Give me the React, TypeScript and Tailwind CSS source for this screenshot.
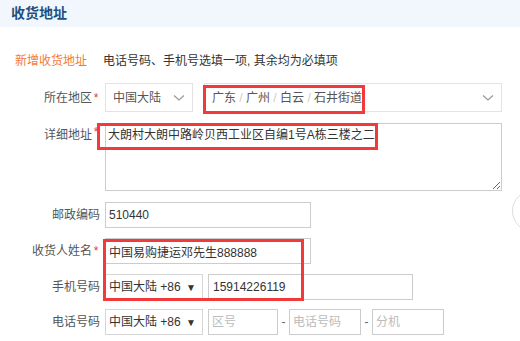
import React from "react";

const font = "font-['Liberation_Sans','Noto_Sans_CJK_SC',sans-serif]";

// Right-aligned field label, with optional red asterisk
const Label = ({ text, required, top }: { text: string; required?: boolean; top?: boolean }) => (
  <div className={`w-[100px] shrink-0 flex justify-end text-[12px] text-[#555] ${top ? "pt-[3px]" : "items-center"}`}>
    <span>{text}</span>
    {required && <span className="w-[8px] text-center text-[#e4393c] leading-[12px]">*</span>}
  </div>
);

const Chevron = () => (
  <svg width="12" height="8" viewBox="0 0 12 8" className="text-[#999]">
    <path d="M1 1.5 L6 6 L11 1.5" fill="none" stroke="currentColor" strokeWidth="1.2" />
  </svg>
);

const PhoneSelect = () => (
  <div className="w-[98px] h-full border border-[#d6d6d6] flex items-center justify-between pl-[3px] pr-[6px] text-[12px] text-[#333]">
    <span>中国大陆 +86</span>
    <span className="text-[10px]">▼</span>
  </div>
);

const App: React.FC = () => {
  return (
    <div className={`relative w-[520px] h-[341px] bg-white overflow-hidden ${font}`}>
      {/* Section header */}
      <div className="h-[27px] bg-[#f2f7fd] flex items-center pl-[11px]">
        <h2 className="text-[14px] font-bold text-[#1f4f7f]">收货地址</h2>
      </div>

      {/* Notice */}
      <div className="mt-[26px] h-[16px] flex items-center text-[12px]">
        <span className="ml-[15px] w-[88px] text-[#f47a3b]">新增收货地址</span>
        <span className="text-[#333]">电话号码、手机号选填一项, 其余均为必填项</span>
      </div>

      {/* Region */}
      <div className="mt-[14px] h-[29px] flex">
        <Label text="所在地区" required />
        <div className="ml-[5px] flex gap-[11px]">
          <div className="w-[88px] h-full border border-[#e3e3e3] flex items-center justify-between pl-[7px] pr-[7px] text-[12px] text-[#555]">
            <span>中国大陆</span>
            <Chevron />
          </div>
          <div className="w-[298px] h-full border border-[#e3e3e3] flex items-center justify-between pl-[7px] pr-[7px] text-[12px] text-[#555]">
            <span>
              广东 <span className="text-[#ccc]">/</span> 广州 <span className="text-[#ccc]">/</span> 白云{" "}
              <span className="text-[#ccc]">/</span> 石井街道
            </span>
            <Chevron />
          </div>
        </div>
      </div>

      {/* Detail address */}
      <div className="mt-[11px] h-[68px] flex">
        <Label text="详细地址" required top />
        <textarea
          defaultValue="大朗村大朗中路岭贝西工业区自编1号A栋三楼之二"
          className="ml-[5px] w-[397px] h-full border border-[#ccc] px-[2px] pt-[3px] text-[12px] leading-[16px] text-[#333] outline-none"
        />
      </div>

      {/* Postcode */}
      <div className="mt-[11px] h-[26px] flex">
        <Label text="邮政编码" />
        <input
          defaultValue="510440"
          className="ml-[5px] w-[206px] h-full border border-[#ccc] px-[3px] text-[12px] text-[#333] outline-none"
        />
      </div>

      {/* Name */}
      <div className="mt-[10px] h-[26px] flex">
        <Label text="收货人姓名" required />
        <input
          defaultValue="中国易购捷运邓先生888888"
          className="ml-[5px] w-[206px] h-full border border-[#ccc] px-[3px] text-[12px] text-[#333] outline-none"
        />
      </div>

      {/* Mobile */}
      <div className="mt-[10px] h-[26px] flex">
        <Label text="手机号码" />
        <div className="ml-[5px] flex gap-[5px] h-full">
          <PhoneSelect />
          <input
            defaultValue="15914226119"
            className="w-[205px] h-full border border-[#ccc] px-[4px] text-[12px] text-[#333] outline-none"
          />
        </div>
      </div>

      {/* Telephone */}
      <div className="mt-[9px] h-[26px] flex">
        <Label text="电话号码" />
        <div className="ml-[5px] flex items-center h-full">
          <PhoneSelect />
          <input
            placeholder="区号"
            className="ml-[5px] w-[70px] h-full border border-[#ccc] px-[3px] text-[12px] placeholder:text-[#bbb] outline-none"
          />
          <span className="w-[11px] text-center text-[12px] text-[#666]">-</span>
          <input
            placeholder="电话号码"
            className="w-[72px] h-full border border-[#ccc] px-[3px] text-[12px] placeholder:text-[#bbb] outline-none"
          />
          <span className="w-[11px] text-center text-[12px] text-[#666]">-</span>
          <input
            placeholder="分机"
            className="w-[72px] h-full border border-[#ccc] px-[3px] text-[12px] placeholder:text-[#bbb] outline-none"
          />
        </div>
      </div>

      {/* red annotation boxes */}
      <div className="absolute left-[203px] top-[85px] w-[162px] h-[29px] border-[3px] border-[#f23a3a] pointer-events-none" />
      <div className="absolute left-[97px] top-[123px] w-[281px] h-[27px] border-[3px] border-[#f23a3a] pointer-events-none" />
      <div className="absolute left-[103px] top-[239px] w-[201px] h-[62px] border-[3px] border-[#f23a3a] pointer-events-none" />

      {/* edge of floating circle button */}
      <div className="absolute left-[512px] top-[190px] w-[42px] h-[42px] rounded-full border border-[#ddd] bg-white" />
    </div>
  );
};

export default App;
